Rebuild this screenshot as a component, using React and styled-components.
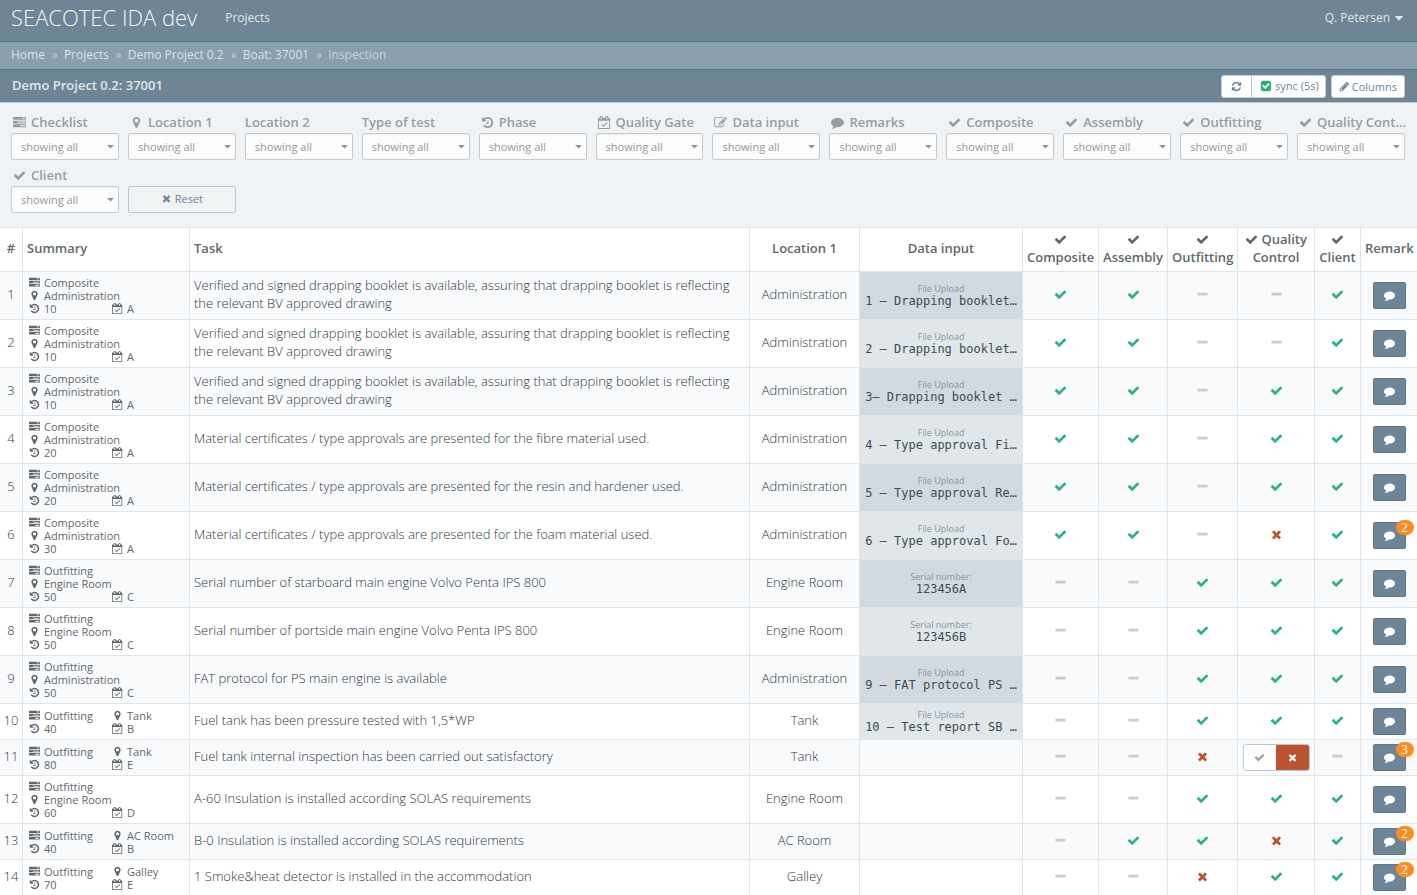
import React, { useState } from "react";
import styled, { createGlobalStyle } from "styled-components";

const ICONS = {
    check: "M1671 566q0 40-28 68l-724 724-136 136q-28 28-68 28t-68-28l-136-136-362-362q-28-28-28-68t28-68l136-136q28-28 68-28t68 28l294 295 656-657q28-28 68-28t68 28l136 136q28 28 28 68z",
    times: "M1490 1322q0 40-28 68l-136 136q-28 28-68 28t-68-28l-294-294-294 294q-28 28-68 28t-68-28l-136-136q-28-28-28-68t28-68l294-294-294-294q-28-28-28-68t28-68l136-136q28-28 68-28t68 28l294 294 294-294q28-28 68-28t68 28l136 136q28 28 28 68t-28 68l-294 294 294 294q28 28 28 68z",
    minus: "M1600 736v192q0 40-28 68t-68 28h-1216q-40 0-68-28t-28-68v-192q0-40 28-68t68-28h1216q40 0 68 28t28 68z",
    comment: "M1792 896q0 174-120 321.5t-326 233-450 85.5q-70 0-145-8-198 175-460 242-49 14-114 22-17 2-30.5-9t-17.5-29v-1q-3-4-.5-12t2-10 4.5-9.500l6-9 7-8.500 8-9q7-8 31-34.500t34.500-38 31-39.500 32.500-51 27-59 26-76q-157-89-247.500-220t-90.500-281q0-130 71-248.500t191-204.500 286-136.500 348-50.500q244 0 450 85.500t326 233 120 321.500z",
    marker: "M1152 640q0-106-75-181t-181-75-181 75-75 181 75 181 181 75 181-75 75-181zm256 0q0 109-33 179l-364 774q-16 33-47.500 52t-67.500 19-67.500-19-46.500-52l-365-774q-33-70-33-179 0-212 150-362t362-150 362 150 150 362z",
    history: "M1664 896q0 156-61 298t-164 245-245 164-298 61q-172 0-327-72.500t-264-204.500q-7-10-6.500-22.500t8.500-20.500l137-138q10-9 25-9 16 2 23 12 73 95 179 147t225 52q104 0 198.500-40.500t163.500-109.500 109.500-163.500 40.500-198.500-40.500-198.500-109.500-163.500-163.500-109.500-198.500-40.500q-98 0-188 35.500t-160 101.500l137 138q31 30 14 69-17 40-59 40h-448q-26 0-45-19t-19-45v-448q0-42 40-59 39-17 69 14l130 129q107-101 244.500-156.500t284.500-55.500q156 0 298 61t245 164 164 245 61 298zm-640-288v448q0 14-9 23t-23 9h-320q-14 0-23-9t-9-23v-64q0-14 9-23t23-9h224v-352q0-14 9-23t23-9h64q14 0 23 9t9 23z",
    tasks: "M1024 1408h640v-128h-640v128zm-384-512h1024v-128h-1024v128zm640-512h384v-128h-384v128zm512 832v256q0 26-19 45t-45 19h-1664q-26 0-45-19t-19-45v-256q0-26 19-45t45-19h1664q26 0 45 19t19 45zm0-512v256q0 26-19 45t-45 19h-1664q-26 0-45-19t-19-45v-256q0-26 19-45t45-19h1664q26 0 45 19t19 45zm0-512v256q0 26-19 45t-45 19h-1664q-26 0-45-19t-19-45v-256q0-26 19-45t45-19h1664q26 0 45 19t19 45z",
    calendar: "M1303 964l-512 512q-10 9-23 9t-23-9l-288-288q-9-10-9-23t9-22l46-46q9-9 22-9t23 9l220 220 444-444q10-9 23-9t22 9l46 46q9 9 9 22t-9 23zm-1175 700h1408v-1024h-1408v1024zm384-1216v-288q0-14-9-23t-23-9h-64q-14 0-23 9t-9 23v288q0 14 9 23t23 9h64q14 0 23-9t9-23zm768 0v-288q0-14-9-23t-23-9h-64q-14 0-23 9t-9 23v288q0 14 9 23t23 9h64q14 0 23-9t9-23zm384-64v1280q0 52-38 90t-90 38h-1408q-52 0-90-38t-38-90v-1280q0-52 38-90t90-38h128v-96q0-66 47-113t113-47h64q66 0 113 47t47 113v96h384v-96q0-66 47-113t113-47h64q66 0 113 47t47 113v96h128q52 0 90 38t38 90z",
    pencil: "M491 1536l91-91-235-235-91 91v107h128v128h107zm523-928q0-22-22-22-10 0-17 7l-542 542q-7 7-7 17 0 22 22 22 10 0 17-7l542-542q7-7 7-17zm-54-192l416 416-832 832h-416v-416zm683 96q0 53-37 90l-166 166-416-416 166-165q36-38 90-38 53 0 91 38l235 234q37 39 37 91z",
    edit: "M888 1184l116-116-152-152-116 116v56h96v96h56zm440-720q-16-16-33 1l-350 350q-17 17-1 33t33-1l350-350q17-17 1-33zm80 594v190q0 119-84.500 203.500t-203.500 84.500h-832q-119 0-203.500-84.500t-84.500-203.500v-832q0-119 84.500-203.500t203.500-84.500h832q63 0 117 25 15 7 18 23 3 17-9 29l-49 49q-14 14-32 8-23-6-45-6h-832q-66 0-113 47t-47 113v832q0 66 47 113t113 47h832q66 0 113-47t47-113v-126q0-13 9-22l64-64q15-15 35-7t20 29zm-96-738l288 288-672 672h-288v-288zm444 132l-92 92-288-288 92-92q28-28 68-28t68 28l152 152q28 28 28 68t-28 68z",
    refresh: "M1639 1056q0 5-1 7-64 268-268 434.500t-478 166.500q-146 0-282.500-55t-243.500-157l-129 129q-19 19-45 19t-45-19-19-45v-448q0-26 19-45t45-19h448q26 0 45 19t19 45-19 45l-137 137q71 66 161 102t187 36q134 0 250-65t186-179q11-17 53-117 8-23 30-23h192q13 0 22.500 9.500t9.500 22.500zm25-800v448q0 26-19 45t-45 19h-448q-26 0-45-19t-19-45 19-45l138-138q-148-137-349-137-134 0-250 65t-186 179q-11 17-53 117-8 23-30 23h-199q-13 0-22.500-9.500t-9.500-22.500v-7q65-268 270-434.500t480-166.500q146 0 284 55.500t245 156.500l130-129q19-19 45-19t45 19 19 45z",
    checkSquare: "M813 1299l614-614q19-19 19-45t-19-45l-102-102q-19-19-45-19t-45 19l-467 467-211-211q-19-19-45-19t-45 19l-102 102q-19 19-19 45t19 45l358 358q19 19 45 19t45-19zm851-883v960q0 119-84.500 203.500t-203.500 84.500h-960q-119 0-203.500-84.500t-84.500-203.500v-960q0-119 84.500-203.500t203.500-84.500h960q119 0 203.500 84.500t84.500 203.500z",
    caret: "M1408 704q0 26-19 45l-448 448q-19 19-45 19t-45-19l-448-448q-19-19-19-45t19-45 45-19h896q26 0 45 19t19 45z",
};

const Icon = ({ name, size = 13, className }) => (
    <svg className={className} width={size} height={size} viewBox="0 0 1792 1792" fill="currentColor" aria-hidden="true">
        <path d={ICONS[name]} />
    </svg>
);

const FILTERS = [
    ["Checklist", "tasks"],
    ["Location 1", "marker"],
    ["Location 2", null],
    ["Type of test", null],
    ["Phase", "history"],
    ["Quality Gate", "calendar"],
    ["Data input", "edit"],
    ["Remarks", "comment"],
    ["Composite", "check"],
    ["Assembly", "check"],
    ["Outfitting", "check"],
    ["Quality Cont…", "check"],
    ["Client", "check"],
];

const CHECKS = ["Composite", "Assembly", "Outfitting", "Quality Control", "Client"];

const BOOKLET =
    "Verified and signed drapping booklet is available, assuring that drapping booklet is reflecting the relevant BV approved drawing";

// marks: y = ok, n = failed, - = open, e = being edited
const ROWS = [
    ["Composite", "Administration", 10, "A", BOOKLET, "File Upload", "1 – Drapping booklet…", "yy--y", 0],
    ["Composite", "Administration", 10, "A", BOOKLET, "File Upload", "2 – Drapping booklet…", "yy--y", 0],
    ["Composite", "Administration", 10, "A", BOOKLET, "File Upload", "3– Drapping booklet …", "yy-yy", 0],
    ["Composite", "Administration", 20, "A", "Material certificates / type approvals are presented for the fibre material used.", "File Upload", "4 – Type approval Fi…", "yy-yy", 0],
    ["Composite", "Administration", 20, "A", "Material certificates / type approvals are presented for the resin and hardener used.", "File Upload", "5 – Type approval Re…", "yy-yy", 0],
    ["Composite", "Administration", 30, "A", "Material certificates / type approvals are presented for the foam material used.", "File Upload", "6 – Type approval Fo…", "yy-ny", 2],
    ["Outfitting", "Engine Room", 50, "C", "Serial number of starboard main engine Volvo Penta IPS 800", "Serial number:", "123456A", "--yyy", 0],
    ["Outfitting", "Engine Room", 50, "C", "Serial number of portside main engine Volvo Penta IPS 800", "Serial number:", "123456B", "--yyy", 0],
    ["Outfitting", "Administration", 50, "C", "FAT protocol for PS main engine is available", "File Upload", "9 – FAT protocol PS …", "--yyy", 0],
    ["Outfitting", "Tank", 40, "B", "Fuel tank has been pressure tested with 1,5*WP", "File Upload", "10 – Test report SB …", "--yyy", 0],
    ["Outfitting", "Tank", 80, "E", "Fuel tank internal inspection has been carried out satisfactory", null, null, "--ne-", 3],
    ["Outfitting", "Engine Room", 60, "D", "A-60 Insulation is installed according SOLAS requirements", null, null, "--yyy", 0],
    ["Outfitting", "AC Room", 40, "B", "B-0 Insulation is installed according SOLAS requirements", null, null, "-yyny", 2],
    ["Outfitting", "Galley", 70, "E", "1 Smoke&heat detector is installed in the accommodation", null, null, "--nyy", 2],
];

const App = () => {
    const [sync, setSync] = useState(true);

    return (
        <>
            <GlobalStyle />
            <Navbar>
                <Brand href="#">SEACOTEC IDA dev</Brand>
                <NavLink href="#projects">Projects</NavLink>
                <UserMenu type="button">
                    Q. Petersen
                    <Icon name="caret" size={14} />
                </UserMenu>
            </Navbar>
            <Breadcrumb aria-label="Breadcrumb">
                {["Home", "Projects", "Demo Project 0.2", "Boat: 37001"].map((crumb) => (
                    <Crumb key={crumb}>
                        <a href="#crumb">{crumb}</a>
                        <Divider>»</Divider>
                    </Crumb>
                ))}
                <Current>Inspection</Current>
            </Breadcrumb>
            <TitleBar>
                <Title>Demo Project 0.2: 37001</Title>
                <ButtonGroup>
                    <ToolButton type="button" aria-label="Refresh" $wide>
                        <Icon name="refresh" size={11} />
                    </ToolButton>
                    <SyncLabel $on={sync}>
                        <input type="checkbox" checked={sync} onChange={() => setSync(!sync)} />
                        <Icon name="checkSquare" size={12} />
                        sync (5s)
                    </SyncLabel>
                </ButtonGroup>
                <ButtonGroup>
                    <ToolButton type="button">
                        <Icon name="pencil" size={11} />
                        Columns
                    </ToolButton>
                </ButtonGroup>
            </TitleBar>

            <Filters>
                {FILTERS.map(([label, icon], i) => (
                    <Filter key={label}>
                        <FilterLabel htmlFor={`filter-${i}`}>
                            {icon && (
                                <FilterIcon>
                                    <Icon name={icon} />
                                </FilterIcon>
                            )}
                            {label}
                        </FilterLabel>
                        <SelectWrap>
                            <Select id={`filter-${i}`}>
                                <option>showing all</option>
                            </Select>
                            <SelectCaret name="caret" size={11} />
                        </SelectWrap>
                    </Filter>
                ))}
                <ResetButton type="button">
                    <Icon name="times" size={11} />
                    Reset
                </ResetButton>
            </Filters>

            <Table>
                <colgroup>
                    <Col $w={23} />
                    <Col $w={167} />
                    <col />
                    <Col $w={110} />
                    <Col $w={163} />
                    <Col $w={76} />
                    <Col $w={69} />
                    <Col $w={70} />
                    <Col $w={77} />
                    <Col $w={46} />
                    <Col $w={56} />
                </colgroup>
                <thead>
                    <tr>
                        <Th>#</Th>
                        <Th $left>Summary</Th>
                        <Th $left>Task</Th>
                        <Th>Location 1</Th>
                        <Th>Data input</Th>
                        {CHECKS.map((check) => (
                            <Th key={check}>
                                <Icon name="check" /> {check}
                            </Th>
                        ))}
                        <Th>Remark</Th>
                    </tr>
                </thead>
                <tbody>
                    {ROWS.map(([list, location, phase, gate, task, kind, value, marks, remarks], i) => (
                        <Row key={i}>
                            <TextCell>{i + 1}</TextCell>
                            <Td>
                                <Summary>
                                    <SummaryItem icon="tasks">{list}</SummaryItem>
                                    <SummaryItem icon="marker">{location}</SummaryItem>
                                    <SummaryItem icon="history">{phase}</SummaryItem>
                                    <SummaryItem icon="calendar">{gate}</SummaryItem>
                                </Summary>
                            </Td>
                            <TaskCell>{task}</TaskCell>
                            <TextCell>{location}</TextCell>
                            {value ? (
                                <DataCell>
                                    <DataKind>{kind}</DataKind>
                                    <DataValue>{value}</DataValue>
                                </DataCell>
                            ) : (
                                <Td />
                            )}
                            {marks.split("").map((mark, j) =>
                                mark === "e" ? (
                                    <Td key={j}>
                                        <MarkToggle />
                                    </Td>
                                ) : (
                                    <MarkCell key={j}>
                                        <Mark value={mark} />
                                    </MarkCell>
                                )
                            )}
                            <Td>
                                <RemarkButton type="button" aria-label="Remarks">
                                    <Icon name="comment" size={11} />
                                    {remarks > 0 && <Badge>{remarks}</Badge>}
                                </RemarkButton>
                            </Td>
                        </Row>
                    ))}
                </tbody>
            </Table>
        </>
    );
};

const SummaryItem = ({ icon, children }) => (
    <Item>
        <ItemIcon>
            <Icon name={icon} size={11} />
        </ItemIcon>
        {children}
    </Item>
);

const MarkToggle = () => (
    <Toggle>
        <ToggleButton type="button" aria-label="Accept">
            <Icon name="check" size={11} />
        </ToggleButton>
        <ToggleButton type="button" aria-label="Reject" $active>
            <Icon name="times" size={11} />
        </ToggleButton>
    </Toggle>
);

const Mark = ({ value }) => {
    if (value === "y") return <MarkIcon name="check" $color="#2ab27b" />;
    if (value === "n") return <MarkIcon name="times" $color="#bb5430" />;
    return <MarkIcon name="minus" $color="#cbcbcb" />;
};

const GlobalStyle = createGlobalStyle`
    * {
        box-sizing: border-box;
    }

    body {
        margin: 0;
        background: #fff;
        color: #5f686c;
        font-family: "Open Sans", "Noto Sans", sans-serif;
        font-size: 13px;
        line-height: 18px;
    }

    button,
    select {
        font-family: inherit;
        cursor: pointer;
    }

    a {
        color: inherit;
        text-decoration: none;
    }
`;

const Navbar = styled.header`
    display: flex;
    align-items: center;
    height: 42px;
    padding: 0 11px 6px;
    background: #6e8597;
    border-bottom: 1px solid #5d7687;
    color: #e0e7ea;
    font-size: 12px;
`;

const Brand = styled.a`
    padding-bottom: 2px;
    color: #f4f7f8;
    font-size: 22px;
    font-weight: 300;
    line-height: 30px;
`;

const NavLink = styled.a`
    margin-left: 28px;
`;

const UserMenu = styled.button`
    display: flex;
    align-items: center;
    gap: 2px;
    margin-left: auto;
    padding: 0;
    border: 0;
    background: none;
    color: inherit;
    font-size: inherit;
`;

const Breadcrumb = styled.nav`
    display: flex;
    align-items: center;
    height: 28px;
    padding: 0 11px 2px;
    background: #889fad;
    border-bottom: 1px solid #5d7687;
    color: #dce4e8;
    font-size: 12px;
`;

const Crumb = styled.span`
    display: flex;
`;

const Divider = styled.span`
    margin: 0 6px 0 7px;
    color: #c3d0d7;
`;

const Current = styled.span`
    color: #c9d5db;
`;

const TitleBar = styled.div`
    display: flex;
    align-items: center;
    gap: 5px;
    height: 33px;
    padding: 0 12px;
    background: #6e8597;
    border-bottom: 1px solid #b9cad3;
`;

const Title = styled.h1`
    flex: 1;
    margin: 0;
    padding-bottom: 2px;
    color: #e0e7ea;
    font-size: 13px;
    font-weight: 600;
`;

const ButtonGroup = styled.div`
    display: flex;
    height: 23px;
    border: 1px solid #c3d0d9;
    border-radius: 3px;
    background: #fff;
    color: #6e8597;
    font-size: 11px;
    overflow: hidden;
`;

const ToolButton = styled.button`
    display: flex;
    align-items: center;
    gap: 2px;
    padding: 0 ${({ $wide }) => ($wide ? 9 : 7)}px;
    border: 0;
    background: none;
    color: inherit;
    font-size: inherit;
`;

const SyncLabel = styled.label`
    display: flex;
    align-items: center;
    gap: 3px;
    padding: 0 6px 0 8px;
    border-left: 1px solid #b9cad3;
    cursor: pointer;

    input {
        position: absolute;
        opacity: 0;
    }

    svg {
        color: ${({ $on }) => ($on ? "#2ab27b" : "#cbcbcb")};
    }
`;

const Filters = styled.form`
    display: grid;
    grid-template-columns: repeat(12, minmax(0, 1fr));
    gap: 7px 9px;
    align-items: end;
    padding: 11px 12px 14px 11px;
    background: #eff3f6;
    border-bottom: 1px solid #dfe5e9;
`;

const Filter = styled.div`
    display: flex;
    flex-direction: column;
`;

const FilterLabel = styled.label`
    display: flex;
    align-items: center;
    gap: 3px;
    height: 19px;
    padding-bottom: 3px;
    color: #959d9f;
    font-weight: 600;
    white-space: nowrap;
`;

const FilterIcon = styled.span`
    display: flex;
    flex: 0 0 17px;
    justify-content: center;
`;

const SelectWrap = styled.div`
    position: relative;
`;

const Select = styled.select`
    display: block;
    width: 100%;
    height: 27px;
    padding: 0 9px;
    appearance: none;
    border: 1px solid #c8cccf;
    border-radius: 2px;
    background: #fcfcfc;
    box-shadow: inset 0 1px 1px rgba(0, 0, 0, 0.06);
    color: #999;
    font-size: 11px;
`;

const SelectCaret = styled(Icon)`
    position: absolute;
    top: 8px;
    right: 3px;
    color: #8f9596;
    pointer-events: none;
`;

const ResetButton = styled.button`
    display: flex;
    align-items: center;
    justify-content: center;
    gap: 3px;
    height: 27px;
    padding-bottom: 3px;
    border: 1px solid #b9cad3;
    border-radius: 2px;
    background: #eff3f4;
    color: #6e8597;
    font-size: 11px;
`;

const Table = styled.table`
    width: 100%;
    table-layout: fixed;
    border-collapse: separate;
    border-spacing: 0;
`;

const Col = styled.col`
    width: ${({ $w }) => $w}px;
`;

const Th = styled.th`
    padding: 2px 4px 5px;
    border-right: 1px solid #dfe5e9;
    border-bottom: 1px solid #dfe5e9;
    font-weight: 600;
    text-align: ${({ $left }) => ($left ? "left" : "center")};

    &:last-child {
        border-right: 0;
    }

    svg {
        vertical-align: -2px;
    }
`;

const Td = styled.td`
    padding: 4px 0;
    border-right: 1px solid #dfe5e9;
    border-bottom: 1px solid #dfe5e9;
    text-align: center;

    &:last-child {
        border-right: 0;
    }
`;

const TextCell = styled(Td)`
    padding: 2px 0 5px;
    color: #30393d;
    font-weight: 300;
`;

const TaskCell = styled(TextCell)`
    padding-left: 4px;
    text-align: left;
`;

const MarkCell = styled(Td)`
    padding: 3px 0 5px;
`;

const DataCell = styled(Td)`
    background: #e0e6ea;
`;

const Row = styled.tr`
    &:nth-child(odd) {
        background: #f9fafc;
    }

    &:nth-child(odd) ${DataCell} {
        background: #d2d9df;
    }

    &:last-child > td {
        border-bottom: 0;
    }
`;

const Summary = styled.div`
    display: flex;
    flex-wrap: wrap;
    font-size: 11px;
    line-height: 13px;
`;

const Item = styled.span`
    display: flex;
    align-items: center;
    gap: 3px;
    min-width: 50%;
    padding-left: 5px;
`;

const ItemIcon = styled.span`
    display: flex;
    flex: 0 0 13px;
    justify-content: center;
`;

const DataKind = styled.div`
    color: #8496a3;
    font-size: 9px;
    line-height: 12px;
`;

const DataValue = styled.div`
    color: #3f4b54;
    font-family: "DejaVu Sans Mono", monospace;
    font-size: 12px;
    line-height: 13px;
    white-space: nowrap;
`;

const MarkIcon = styled(Icon)`
    display: block;
    margin: 0 auto;
    color: ${({ $color }) => $color};
`;

const Toggle = styled.div`
    display: flex;
    width: 67px;
    height: 27px;
    margin: 0 auto;
    border: 1px solid #b9cad3;
    border-radius: 3px;
    overflow: hidden;
`;

const ToggleButton = styled.button`
    display: flex;
    flex: 1;
    align-items: center;
    justify-content: center;
    padding: 0;
    border: 0;
    background: ${({ $active }) => ($active ? "#bb5430" : "#fff")};
    color: ${({ $active }) => ($active ? "#fff" : "#a3a3a3")};
`;

const RemarkButton = styled.button`
    position: relative;
    display: flex;
    align-items: center;
    justify-content: center;
    width: 33px;
    height: 27px;
    margin: 0 auto;
    padding: 0;
    border: 1px solid #5d7687;
    border-radius: 2px;
    background: #6e8597;
    color: #fff;
`;

const Badge = styled.span`
    position: absolute;
    top: -3px;
    right: -9px;
    min-width: 18px;
    border-radius: 8px;
    background: #ff8a1f;
    font-size: 12px;
    line-height: 15px;
    text-align: center;
`;

export default App;
